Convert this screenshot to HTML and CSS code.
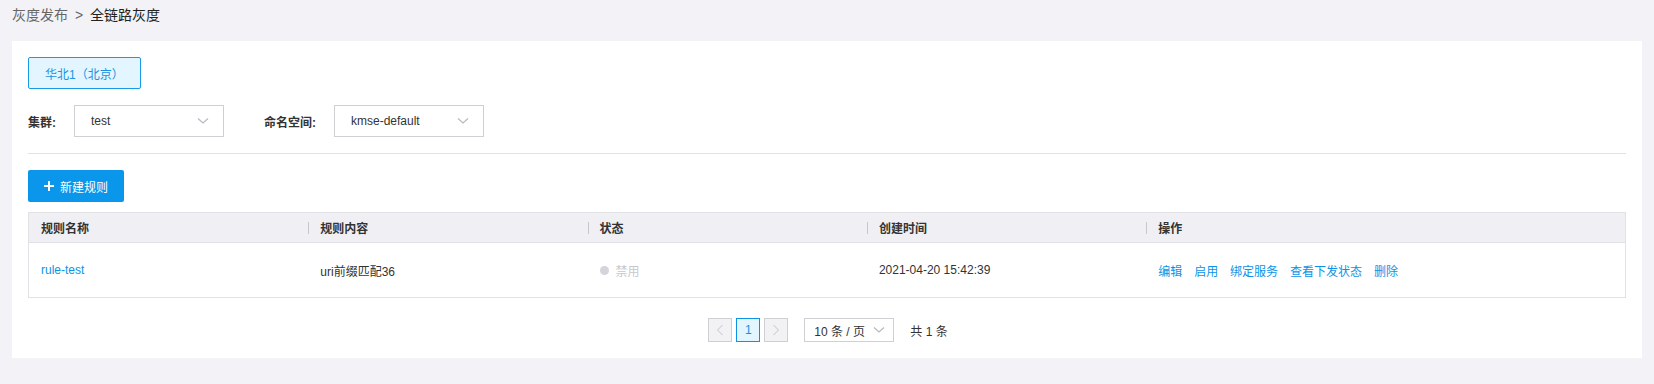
FILE: index.html
```html
<!DOCTYPE html>
<html lang="zh-CN">
<head>
    <meta charset="UTF-8">
    <title>全链路灰度</title>
    <link rel="stylesheet" href="styles.css">
</head>
<body>

    <div class="breadcrumb">
        <span class="crumb-parent">灰度发布</span>
        <span class="crumb-sep">&gt;</span>
        <span class="crumb-current">全链路灰度</span>
    </div>

    <div class="panel">
        <div class="region-row">
            <button class="region-btn">华北1（北京）</button>
        </div>

        <div class="filter-row">
            <label class="filter-label">集群:</label>
            <div class="select">
                <span>test</span>
                <svg class="chevron" width="12" height="8" viewBox="0 0 12 8"><path d="M1 1.5 L6 6 L11 1.5" fill="none" stroke="#b8b8c0" stroke-width="1.2"/></svg>
            </div>
            <label class="filter-label ns-label">命名空间:</label>
            <div class="select">
                <span>kmse-default</span>
                <svg class="chevron" width="12" height="8" viewBox="0 0 12 8"><path d="M1 1.5 L6 6 L11 1.5" fill="none" stroke="#b8b8c0" stroke-width="1.2"/></svg>
            </div>
        </div>

        <div class="divider"></div>

        <button class="add-btn">
            <svg width="10" height="10" viewBox="0 0 10 10"><path d="M5 0 V10 M0 5 H10" stroke="#fff" stroke-width="2"/></svg>
            新建规则
        </button>

        <table class="rule-table">
            <thead>
                <tr>
                    <th class="col-name">规则名称</th>
                    <th class="col-content"><span class="th-sep"></span>规则内容</th>
                    <th class="col-status"><span class="th-sep"></span>状态</th>
                    <th class="col-time"><span class="th-sep"></span>创建时间</th>
                    <th class="col-ops"><span class="th-sep"></span>操作</th>
                </tr>
            </thead>
            <tbody>
                <tr>
                    <td><a class="link" href="#">rule-test</a></td>
                    <td>uri前缀匹配36</td>
                    <td><span class="status-off"><span class="dot"></span>禁用</span></td>
                    <td>2021-04-20 15:42:39</td>
                    <td class="ops">
                        <a class="link" href="#">编辑</a>
                        <a class="link" href="#">启用</a>
                        <a class="link" href="#">绑定服务</a>
                        <a class="link" href="#">查看下发状态</a>
                        <a class="link" href="#">删除</a>
                    </td>
                </tr>
            </tbody>
        </table>

        <div class="pager">
            <span class="page-btn disabled">
                <svg width="8" height="12" viewBox="0 0 8 12"><path d="M6.5 1 L1.5 6 L6.5 11" fill="none" stroke="#c4c4c8" stroke-width="1"/></svg>
            </span>
            <span class="page-btn current">1</span>
            <span class="page-btn disabled">
                <svg width="8" height="12" viewBox="0 0 8 12"><path d="M1.5 1 L6.5 6 L1.5 11" fill="none" stroke="#c4c4c8" stroke-width="1"/></svg>
            </span>
            <div class="page-size">
                <span>10 条 / 页</span>
                <svg class="chevron" width="12" height="8" viewBox="0 0 12 8"><path d="M1 1.5 L6 6 L11 1.5" fill="none" stroke="#b8b8c0" stroke-width="1.2"/></svg>
            </div>
            <span class="total">共 1 条</span>
        </div>
    </div>

</body>
</html>
```

FILE: styles.css
```css
body {
    margin: 0;
    padding: 0 12px 26px;
    background-color: #f3f3f7;
    color: #333;
    font-family: "Liberation Sans", Arial, "Noto Sans CJK SC", sans-serif;
    font-size: 12px;
}

.breadcrumb {
    height: 41px;
    line-height: 30px;
    font-size: 14px;
}

.crumb-parent {
    color: #666;
}

.crumb-sep {
    color: #666;
    margin: 0 3px;
}

.crumb-current {
    color: #222;
}

.panel {
    background-color: #fff;
    padding: 16px;
}

.region-btn {
    height: 32px;
    padding: 0 16px;
    border: 1px solid #1a9ae6;
    border-radius: 2px;
    background-color: #e3f5fe;
    color: #1a93e0;
    font-family: inherit;
    font-size: 12px;
}

.filter-row {
    display: flex;
    align-items: center;
    margin-top: 16px;
}

.filter-label {
    font-weight: bold;
    color: #333;
    width: 46px;
}

.ns-label {
    margin-left: 40px;
    width: 70px;
}

.select {
    width: 150px;
    height: 32px;
    box-sizing: border-box;
    border: 1px solid #d0d0d4;
    display: flex;
    align-items: center;
    justify-content: space-between;
    padding: 0 14px 0 16px;
    color: #333;
}

.divider {
    height: 1px;
    background-color: #e2e2e6;
    margin: 16px 0;
}

.add-btn {
    height: 32px;
    padding: 0 16px;
    border: none;
    border-radius: 2px;
    background-color: #0a96ea;
    color: #fff;
    font-family: inherit;
    font-size: 12px;
    display: flex;
    align-items: center;
    gap: 6px;
}

.rule-table {
    width: 100%;
    margin-top: 10px;
    border: 1px solid #e2e2e6;
    border-spacing: 0;
    table-layout: fixed;
}

.rule-table th {
    box-sizing: border-box;
    height: 30px;
    background-color: #f0f0f4;
    border-bottom: 1px solid #e2e2e6;
    text-align: left;
    font-weight: bold;
    color: #333;
    padding: 0 12px;
    position: relative;
}

.th-sep {
    position: absolute;
    left: 0;
    top: 9px;
    width: 1px;
    height: 12px;
    background-color: #c8c8cc;
}

.col-name, .col-content, .col-status, .col-time {
    width: 17.5%;
}

.col-ops {
    width: 30%;
}

.rule-table td {
    height: 54px;
    padding: 0 12px;
    color: #333;
}

.link {
    color: #0d93e6;
    text-decoration: none;
}

.ops .link {
    margin-right: 8.6px;
}

.status-off {
    color: #c8c8cc;
    display: inline-flex;
    align-items: center;
}

.dot {
    width: 9px;
    height: 9px;
    border-radius: 50%;
    background-color: #d4d4da;
    margin-right: 7px;
}

.pager {
    display: flex;
    align-items: center;
    justify-content: center;
    margin-top: 20px;
    padding-left: 2px;
}

.page-btn {
    width: 24px;
    height: 24px;
    box-sizing: border-box;
    border: 1px solid #d0d0d4;
    background-color: #f2f2f4;
    display: flex;
    align-items: center;
    justify-content: center;
    margin-right: 4px;
}

.page-btn.current {
    border-color: #0d93e6;
    background-color: #e3f5fe;
    color: #0d93e6;
}

.page-size {
    width: 90px;
    height: 24px;
    box-sizing: border-box;
    border: 1px solid #d0d0d4;
    display: flex;
    align-items: center;
    justify-content: space-between;
    padding: 0 8px 0 9px;
    margin-left: 12px;
    color: #333;
}

.total {
    margin-left: 16px;
    color: #333;
}
```
